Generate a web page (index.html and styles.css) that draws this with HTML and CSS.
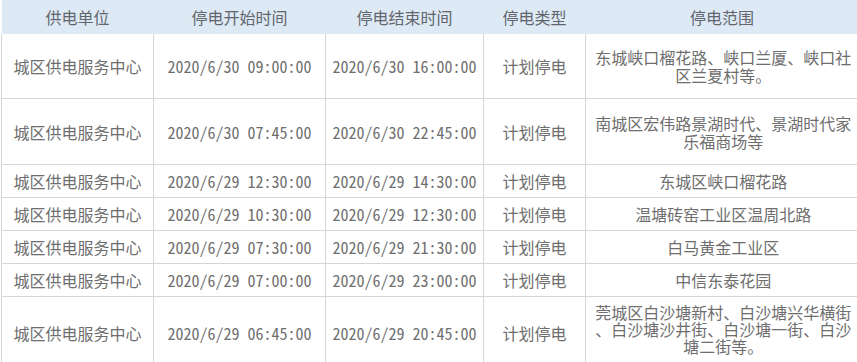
FILE: index.html
```html
<!DOCTYPE html>
<html lang="zh-CN">
<head>
<meta charset="utf-8">
<title>停电信息</title>
<link rel="stylesheet" href="styles.css">
</head>
<body>
<div class="wrap">
<table class="outage">
  <colgroup>
    <col class="c1"><col class="c2"><col class="c3"><col class="c4"><col class="c5">
  </colgroup>
  <thead>
    <tr><th>供电单位</th><th>停电开始时间</th><th>停电结束时间</th><th>停电类型</th><th>停电范围</th></tr>
  </thead>
  <tbody>
    <tr class="r2a"><td>城区供电服务中心</td><td>2020/6/30 09:00:00</td><td>2020/6/30 16:00:00</td><td>计划停电</td><td class="scope">东城峡口榴花路、峡口兰厦、峡口社区兰夏村等。</td></tr>
    <tr class="r2b"><td>城区供电服务中心</td><td>2020/6/30 07:45:00</td><td>2020/6/30 22:45:00</td><td>计划停电</td><td class="scope">南城区宏伟路景湖时代、景湖时代家乐福商场等</td></tr>
    <tr class="r1"><td>城区供电服务中心</td><td>2020/6/29 12:30:00</td><td>2020/6/29 14:30:00</td><td>计划停电</td><td class="scope">东城区峡口榴花路</td></tr>
    <tr class="r1"><td>城区供电服务中心</td><td>2020/6/29 10:30:00</td><td>2020/6/29 12:30:00</td><td>计划停电</td><td class="scope">温塘砖窑工业区温周北路</td></tr>
    <tr class="r1"><td>城区供电服务中心</td><td>2020/6/29 07:30:00</td><td>2020/6/29 21:30:00</td><td>计划停电</td><td class="scope">白马黄金工业区</td></tr>
    <tr class="r1"><td>城区供电服务中心</td><td>2020/6/29 07:00:00</td><td>2020/6/29 23:00:00</td><td>计划停电</td><td class="scope">中信东泰花园</td></tr>
    <tr class="r3"><td>城区供电服务中心</td><td>2020/6/29 06:45:00</td><td>2020/6/29 20:45:00</td><td>计划停电</td><td class="scope">莞城区白沙塘新村、白沙塘兴华横街、白沙塘沙井街、白沙塘一街、白沙塘二街等。</td></tr>
  </tbody>
</table>
</div>
</body>
</html>
```
FILE: styles.css
```css
html, body {
  margin: 0;
  padding: 0;
  background: #fff;
  overflow: hidden;
}
.wrap {
  padding-left: 1px;
  width: 856px;
  overflow: hidden;
}
.outage {
  border-collapse: collapse;
  table-layout: fixed;
  width: 857px;
  font-family: "Noto Sans Mono CJK SC", "Noto Sans CJK SC", sans-serif;
  font-size: 16px;
  color: #6e6e6e;
}
.c1 { width: 152px; }
.c2 { width: 172px; }
.c3 { width: 158px; }
.c4 { width: 102px; }
.c5 { width: 273px; }
.outage th {
  background: #dde9f5;
  color: #62666c;
  font-weight: normal;
  height: 34px;
  padding: 0;
  text-align: center;
  border: 0;
}
.outage td {
  border: 1px solid #d6d6d6;
  text-align: center;
  vertical-align: middle;
  padding: 0 4px;
  line-height: 18px;
  white-space: nowrap;
}
.outage tbody tr:first-child td { border-top: 0; }
.outage td.scope {
  white-space: normal;
  line-break: anywhere;
  padding: 0 6px 0 8px;
  border-right: 0;
}
.r1 td { height: 32px; }
.r2a td { height: 64px; }
.r2b td { height: 65px; }
.r3 td { height: 66px; line-height: 17px; }
.r3 td.scope { padding-top: 7px; vertical-align: top; }
```
